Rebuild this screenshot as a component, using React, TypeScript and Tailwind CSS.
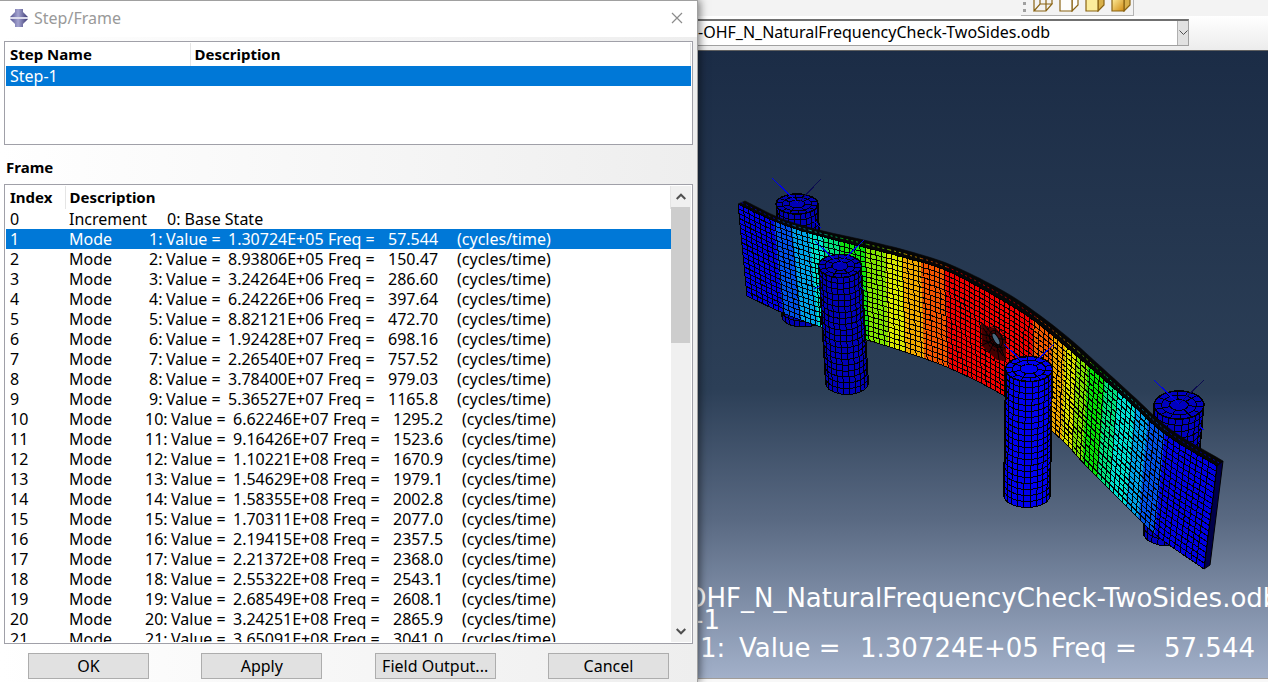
import React from "react";

type Pt = [number, number];

const FRAMES: [number, string, string][] = [
  [1, "1.30724E+05", "57.544"],
  [2, "8.93806E+05", "150.47"],
  [3, "3.24264E+06", "286.60"],
  [4, "6.24226E+06", "397.64"],
  [5, "8.82121E+06", "472.70"],
  [6, "1.92428E+07", "698.16"],
  [7, "2.26540E+07", "757.52"],
  [8, "3.78400E+07", "979.03"],
  [9, "5.36527E+07", "1165.8"],
  [10, "6.62246E+07", "1295.2"],
  [11, "9.16426E+07", "1523.6"],
  [12, "1.10221E+08", "1670.9"],
  [13, "1.54629E+08", "1979.1"],
  [14, "1.58355E+08", "2002.8"],
  [15, "1.70311E+08", "2077.0"],
  [16, "2.19415E+08", "2357.5"],
  [17, "2.21372E+08", "2368.0"],
  [18, "2.55322E+08", "2543.1"],
  [19, "2.68549E+08", "2608.1"],
  [20, "3.24251E+08", "2865.9"],
  [21, "3.65091E+08", "3041.0"],
];

/* Plate stations: front top x, y, front bottom x, y, rear top x, y */
const STATIONS = [
  [738, 204, 747, 296, 745, 201],
  [774, 221, 783, 313, 780, 218],
  [809, 233, 818, 326, 815, 229],
  [863, 247, 867, 340, 868, 241],
  [902, 257, 905, 352, 908, 251],
  [945, 270, 949, 368, 951, 265],
  [1000, 299, 1001, 394, 1005, 292],
  [1033, 320, 1032, 416, 1038, 314],
  [1065, 346, 1062, 440, 1070, 339],
  [1093, 370, 1087, 467, 1098, 364],
  [1127, 400, 1118, 498, 1132, 395],
  [1165, 434, 1155, 534, 1170, 429],
  [1217, 466, 1204, 569, 1223, 461],
];

/* Contour bands: right-hand limit along the front top edge, colour */
const BANDS: [number, string][] = [
  [774, "#0000e2"],
  [792, "#0050e6"],
  [809, "#00a0e6"],
  [824, "#00e0c8"],
  [840, "#00e07c"],
  [865, "#0ee00e"],
  [885, "#80e400"],
  [902, "#d8e800"],
  [921, "#f0aa00"],
  [945, "#f05400"],
  [1033, "#ee0000"],
  [1052, "#f05a00"],
  [1065, "#eca600"],
  [1077, "#d8e000"],
  [1088, "#80e000"],
  [1105, "#06e006"],
  [1118, "#00e080"],
  [1135, "#00e0d0"],
  [1148, "#00a0e6"],
  [1165, "#0052e6"],
  [1217, "#0000e2"],
];

function stationAt(x: number): number[] {
  let i = 0;
  while (i < STATIONS.length - 2 && x > STATIONS[i + 1][0]) i++;
  const a = STATIONS[i];
  const b = STATIONS[i + 1];
  const p = STATIONS[Math.max(0, i - 1)];
  const n = STATIONS[Math.min(STATIONS.length - 1, i + 2)];
  const t = (x - a[0]) / (b[0] - a[0]);
  return a.map((v, k) => {
    const span = b[0] - a[0];
    const m0 = ((b[k] - p[k]) / (b[0] - p[0])) * span;
    const m1 = ((n[k] - v) / (n[0] - a[0])) * span;
    const t2 = t * t;
    const t3 = t2 * t;
    return (2 * t3 - 3 * t2 + 1) * v + (t3 - 2 * t2 + t) * m0 + (-2 * t3 + 3 * t2) * b[k] + (t3 - t2) * m1;
  });
}

const line = (pts: Pt[]) => pts.map((p) => p[0].toFixed(1) + "," + p[1].toFixed(1)).join(" ");

function bandShape(from: number, to: number) {
  const s: number[][] = [];
  for (let i = 0; i <= 6; i++) s.push(stationAt(from + ((to - from) * i) / 6));
  const top = s.map((v): Pt => [v[0], v[1]]);
  const bottom = s.map((v): Pt => [v[2], v[3]]).reverse();
  return line([...top, ...bottom]);
}

const ROWS = 19;

function Plate() {
  const columns: number[] = [];
  let x = 738;
  while (x < 1214) {
    columns.push(x);
    x += x < 930 ? 5.3 : x < 1040 ? 5 : x < 1165 ? 4.6 : 5.8;
  }
  columns.push(1217);
  const s = columns.map(stationAt);
  const rows = Array.from({ length: ROWS + 1 }, (_, r) =>
    s.map((v): Pt => [v[0] + ((v[2] - v[0]) * r) / ROWS, v[1] + ((v[3] - v[1]) * r) / ROWS]),
  );
  const rear = s.map((v): Pt => [v[4], v[5]]);
  const mid = s.map((v): Pt => [(v[0] + v[4]) / 2, (v[1] + v[5]) / 2]);
  return (
    <g>
      <polygon points={line([...rows[0], ...[...rear].reverse()])} fill="#050505" stroke="#050505" strokeWidth="0.6" />
      {BANDS.map(([to, colour], i) => {
        const from = i ? BANDS[i - 1][0] : 738;
        const top = mid.filter((p) => p[0] >= from && p[0] <= to + 5);
        return (
          <g key={to}>
            <polygon points={bandShape(from, to)} fill={colour} />
            <polyline points={line(top)} fill="none" stroke={colour} strokeOpacity="0.7" strokeDasharray="2 3" />
          </g>
        );
      })}
      <polygon points="1217,466 1223,461 1210,565 1204,569" fill="#000048" stroke="#000" />
      <g stroke="#000" fill="none" shapeRendering="crispEdges">
        {rows.map((r, i) => (
          <polyline key={i} points={line(r)} />
        ))}
        {s.map((v, i) => (
          <line key={i} x1={v[0]} y1={v[1]} x2={v[2]} y2={v[3]} />
        ))}
      </g>
      <path d="M981 322l7 5 8 1 10 12v21l-9-1-8-7-7-7z" fill="#420000" />
      <g stroke="#000" strokeWidth="1" fill="none">
        <path d="M981 322l15 16 10 22M981 346l15-8 10 2M989 353l7-15-1-10M981 334l15 4 3 22M983 328l20 28M983 340l20 8" />
        <ellipse cx="996" cy="339" rx="6" ry="9" transform="rotate(-25 996 339)" />
        <ellipse cx="996" cy="339" rx="9" ry="13" transform="rotate(-25 996 339)" strokeDasharray="2 1" />
      </g>
      <ellipse cx="996" cy="339" rx="2.5" ry="6.5" transform="rotate(-30 996 339)" fill="#4a6880" stroke="#000" />
    </g>
  );
}

interface RollerProps {
  top: Pt;
  bottom: Pt;
  rx: number;
  ry: number;
  colour: string;
  rows: number;
}

function Roller({ top, bottom, rx, ry, colour, rows }: RollerProps) {
  const rad = (d: number) => (d * Math.PI) / 180;
  const on = (c: Pt, d: number, k = 1): Pt => [c[0] + rx * k * Math.cos(rad(d)), c[1] + ry * k * Math.sin(rad(d))];
  const half = Array.from({ length: 12 }, (_, i) => (i * 180) / 11);
  const body: Pt[] = [on(top, 180), ...half.map((d) => on(bottom, 180 - d)), on(top, 0)];
  return (
    <g stroke="#000" shapeRendering="crispEdges">
      <polygon points={line(body)} fill={colour} />
      {half.map((d) => {
        const a = on(top, d);
        const b = on(bottom, d);
        return <line key={d} x1={a[0]} y1={a[1]} x2={b[0]} y2={b[1]} />;
      })}
      {Array.from({ length: rows }, (_, r) => {
        const t = r / rows;
        const c: Pt = [top[0] + (bottom[0] - top[0]) * t, top[1] + (bottom[1] - top[1]) * t];
        return <polyline key={r} points={line(half.map((d) => on(c, d)))} fill="none" />;
      })}
      <ellipse cx={top[0]} cy={top[1]} rx={rx} ry={ry} fill={colour} strokeWidth="1.5" />
      <g fill="none">
        <ellipse cx={top[0]} cy={top[1]} rx={rx * 0.7} ry={ry * 0.7} />
        <ellipse cx={top[0]} cy={top[1]} rx={rx * 0.38} ry={ry * 0.38} />
        {Array.from({ length: 14 }, (_, i) => {
          const a = on(top, (i * 360) / 14 + 8, i % 2 ? 0.7 : 0.38);
          const b = on(top, (i * 360) / 14 + 8);
          return <line key={i} x1={a[0]} y1={a[1]} x2={b[0]} y2={b[1]} />;
        })}
      </g>
    </g>
  );
}

function Model() {
  return (
    <svg viewBox="698 51 570 627" className="block h-full w-full" role="img" aria-label="Deformed mode shape">
      <Roller top={[797, 204]} bottom={[803, 317]} rx={21} ry={10} colour="#0000b4" rows={19} />
      <Roller top={[1179, 405]} bottom={[1168, 532]} rx={25} ry={14} colour="#0000c0" rows={20} />
      <Plate />
      <Roller top={[840, 266]} bottom={[847, 383]} rx={21.5} ry={11.5} colour="#0000b8" rows={20} />
      <Roller top={[1029, 369]} bottom={[1027, 495]} rx={23.5} ry={12.5} colour="#0000ee" rows={21} />
      <g fill="none" stroke="#0000ee" shapeRendering="crispEdges">
        <path d="M772 178l26 25M815 241l24 23 25-24M1004 344l25 24 25-24M1154 380l25 24" />
        <path d="M813 220l8 8M814 289l6-3M860 286l4 4M1200 427l4 3" />
      </g>
      <path d="M821 179l-23 24M1204 380l-25 24" fill="none" stroke="#0c0c50" shapeRendering="crispEdges" />
    </svg>
  );
}

function AppIcon() {
  return (
    <svg viewBox="0 0 18 18" className="h-[18px] w-[18px]" aria-hidden="true">
      <defs>
        <linearGradient id="arm" x1="0" x2="1">
          <stop offset="0" stopColor="#55538f" />
          <stop offset="0.45" stopColor="#a3a3d0" />
          <stop offset="1" stopColor="#3b3872" />
        </linearGradient>
      </defs>
      <path d="M5 0h8v3l2 2 3 3H0l3-3 2-2zM0 10h18l-3 3-2 2v3H5v-3l-2-2z" fill="url(#arm)" />
      <path d="M0 8h18v2H0z" fill="#dcdcec" />
    </svg>
  );
}

function Chevron({ up = false }: { up?: boolean }) {
  return (
    <svg viewBox="0 0 10 7" className="h-[7px] w-[10px]" fill="none" stroke="#505050" strokeWidth="2" aria-hidden="true">
      <path d={up ? "M.7 6L5 1.7 9.3 6" : "M.7 1L5 5.3 9.3 1"} />
    </svg>
  );
}

function Dialog() {
  return (
    <section
      aria-label="Step/Frame"
      className="relative z-10 flex w-[698px] shrink-0 flex-col border-t border-r border-[#a0a0a0] bg-linear-to-r from-white to-[#eeeeee] shadow-[2px_0_8px_rgba(0,0,0,0.5)]"
    >
      <header className="flex h-9 items-center bg-white pr-3 pb-0.5 pl-2.5">
        <AppIcon />
        <h1 className="ml-1.5 flex-1 text-[#999]">Step/Frame</h1>
        <button aria-label="Close" className="flex h-4 w-4 items-center justify-center">
          <svg viewBox="0 0 12 12" className="h-3 w-3" stroke="#8c8c8c" strokeWidth="1.2">
            <path d="M1 1l10 10M11 1L1 11" />
          </svg>
        </button>
      </header>

      <div className="mx-1 mt-1 h-[104px] shrink-0 border border-[#a0a0a8] bg-white p-px">
        <table className="w-full table-fixed border-collapse text-left">
          <thead className="text-[15px]">
            <tr className="h-[23px]">
              <th className="w-[184px] border-r border-[#e5e5e5] px-1 pt-0 pb-0.5 font-bold">Step Name</th>
              <th className="border-r border-[#e5e5e5] px-1 pt-0 pb-0.5 font-bold">Description</th>
            </tr>
          </thead>
          <tbody>
            <tr className="h-5 bg-[#0078d7] text-white">
              <td className="px-1 py-0">Step-1</td>
              <td className="p-0" />
            </tr>
          </tbody>
        </table>
      </div>

      <h2 className="mt-3 mb-[7px] pl-1.5 text-[15px] leading-5 font-bold">Frame</h2>

      <div className="mx-1 flex min-h-0 flex-1 border border-[#a0a0a8] bg-white p-px">
        <div className="min-w-0 flex-1 overflow-hidden">
          <table className="w-full table-fixed border-collapse text-left">
            <thead className="text-[15px]">
              <tr className="h-[23px]">
                <th className="w-[59px] border-r border-[#e5e5e5] px-1 pt-0 pb-0.5 font-bold">Index</th>
                <th className="border-r border-[#e5e5e5] px-1 pt-0 pb-0.5 font-bold">Description</th>
              </tr>
            </thead>
            <tbody>
              <tr className="h-5">
                <td className="px-1 py-0">0</td>
                <td className="px-1 py-0">
                  <div className="flex">
                    <span className="w-[98px]">Increment</span>
                    <span>0: Base State</span>
                  </div>
                </td>
              </tr>
              {FRAMES.map(([n, value, freq]) => (
                <tr key={n} className={n === 1 ? "h-5 bg-[#0078d7] text-white" : "h-5"}>
                  <td className="px-1 py-0">{n}</td>
                  <td className="px-1 py-0">
                    <div className="flex whitespace-nowrap">
                      <span className={n < 10 ? "w-20" : "w-[76px]"}>Mode</span>
                      <span className={n < 10 ? "w-[17px]" : "w-[26px]"}>{n}:</span>
                      <span className="w-[62px]">Value =</span>
                      <span className="w-[100px]">{value}</span>
                      <span className="w-[60px]">Freq =</span>
                      <span className="w-[69px]">{freq}</span>
                      <span>(cycles/time)</span>
                    </div>
                  </td>
                </tr>
              ))}
            </tbody>
          </table>
        </div>
        <div className="flex w-5 flex-col bg-[#f0f0f0]">
          <button aria-label="Scroll up" className="flex h-[21px] items-center justify-center">
            <Chevron up />
          </button>
          <div className="flex-1">
            <div className="mr-px h-[136px] bg-[#cdcdcd]" />
          </div>
          <button aria-label="Scroll down" className="flex h-[21px] items-center justify-center">
            <Chevron />
          </button>
        </div>
      </div>

      <footer className="flex justify-between px-7 pt-[9px] pb-[3px]">
        {["OK", "Apply", "Field Output...", "Cancel"].map((label) => (
          <button key={label} className="h-[26px] w-[121px] border border-[#adadad] bg-[#e1e1e1]">
            {label}
          </button>
        ))}
      </footer>
    </section>
  );
}

function ToolbarIcon({ kind }: { kind: "wire" | "hidden" | "fill" | "shade" }) {
  const face = kind === "fill" ? "#fbec9c" : kind === "shade" ? "url(#gold)" : kind === "hidden" ? "#fdfdfd" : "none";
  return (
    <button aria-label={kind} className="h-3 w-5">
      <svg viewBox="0 0 20 12" className="h-3 w-5" fill={face} stroke="#8a6414" strokeWidth="1.2">
        <defs>
          <linearGradient id="gold" x1="0" x2="1" y2="1">
            <stop offset="0" stopColor="#fff0a0" />
            <stop offset="1" stopColor="#d08a10" />
          </linearGradient>
        </defs>
        {kind === "wire" ? (
          <path d="M1 11L7 4H19L13 11zM7 4V-2M13 11V-2M1 11V-2M19 4V-2" />
        ) : (
          <>
            <path d="M13 11L19 5V-2H13z" fill={kind === "hidden" ? "#fdfdfd" : "#d8b04a"} />
            <path d="M1 -2V11H13V-2z" />
          </>
        )}
      </svg>
    </button>
  );
}

function Workspace() {
  return (
    <main className="flex min-w-0 flex-1 flex-col bg-[#f4f4f4]">
      <div className="flex h-4 justify-end overflow-hidden bg-[#f3f3f3] pr-[134px]">
        <div className="flex h-4 gap-1.5 border-r border-b border-[#b4b4b4] pr-0.5 pl-0.5">
          <div className="flex w-1 flex-col gap-1 pt-0.5">
            <i className="h-[3px] w-[3px] bg-[#a0a0a0]" />
            <i className="h-[3px] w-[3px] bg-[#a0a0a0]" />
          </div>
          <ToolbarIcon kind="wire" />
          <ToolbarIcon kind="hidden" />
          <ToolbarIcon kind="fill" />
          <ToolbarIcon kind="shade" />
        </div>
      </div>
      <div className="flex h-[35px] shrink-0 items-start border-b border-[#606060] bg-linear-to-b from-white to-[#ececec] pt-[3px] pr-[79px]">
        <label htmlFor="odb" className="sr-only">
          Output database
        </label>
        <div className="flex h-[27px] min-w-0 flex-1 border-t-2 border-r border-b border-t-[#707070] border-r-[#a0a0a0] border-b-[#a0a0a0] bg-white">
          <select id="odb" className="min-w-0 flex-1 appearance-none bg-white p-0 pb-0.5 text-[16px]">
            <option>-OHF_N_NaturalFrequencyCheck-TwoSides.odb</option>
          </select>
          <span className="flex w-[11px] items-center justify-center border-l border-[#b0b0b0] bg-[#e1e1e1]">
            <svg viewBox="0 0 9 6" className="h-1.5 w-[9px]" fill="none" stroke="#505050">
              <path d="M.5 .5l4 4 4-4" />
            </svg>
          </span>
        </div>
      </div>
      <div className="relative min-h-0 flex-1 overflow-hidden border-b border-[#a09c98] bg-[linear-gradient(#1b2c46,#2c3f57_54%,#5a6a83_75%,#a2b0c9)]">
        <Model />
        <div className="absolute bottom-[19px] left-0 font-['DejaVu_Sans',sans-serif] text-[26px] leading-[22px] whitespace-pre text-white">
          <p className="-ml-3">OHF_N_NaturalFrequencyCheck-TwoSides.odb</p>
          <p className="-ml-1">-1</p>
          <p className="mt-1.5 flex pl-0.5">
            <span className="w-[39px]">1:</span>
            <span className="w-[121px]">Value =</span>
            <span className="w-[191px]">1.30724E+05</span>
            <span className="w-[113px]">Freq =</span>
            <span>57.544</span>
          </p>
        </div>
      </div>
      <div className="h-[3px] shrink-0 bg-[#f8f8f8]" />
    </main>
  );
}

export default function App() {
  return (
    <div className="flex h-screen overflow-hidden bg-white font-['Noto_Sans',sans-serif] text-[16px] leading-5 text-black">
      <Dialog />
      <Workspace />
    </div>
  );
}
